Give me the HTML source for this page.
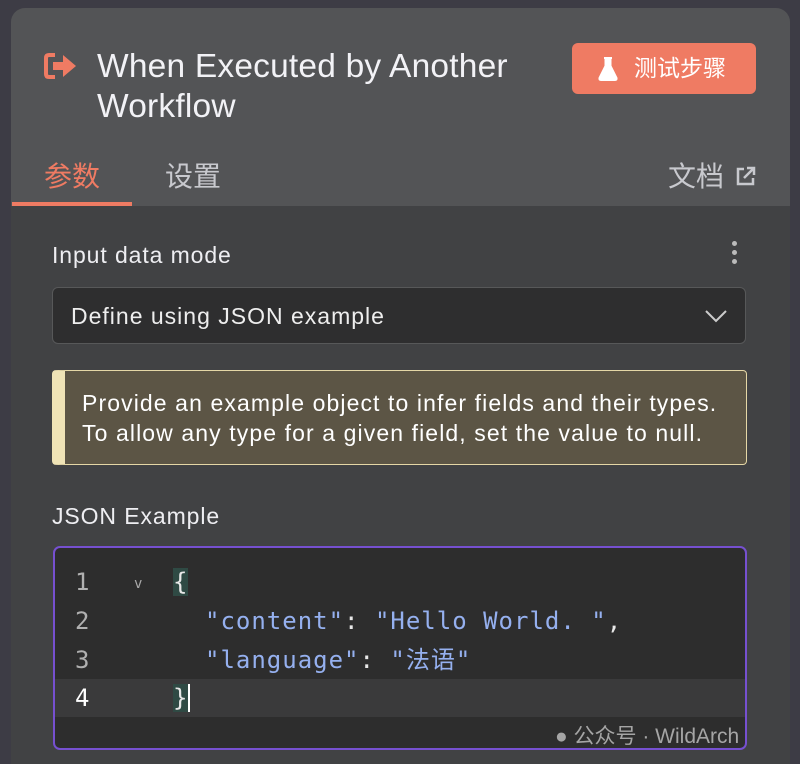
<!DOCTYPE html><html><head><meta charset="utf-8"><style>
html,body{margin:0;width:800px;height:764px;overflow:hidden}
body{background:#3d3c45;font-family:"Liberation Sans","Noto Sans CJK SC",sans-serif;position:relative}
.panel{position:absolute;left:11px;top:8px;width:779px;height:756px;background:#414244;border-radius:14px 14px 0 0;overflow:hidden}
.head{position:absolute;left:0;top:0;width:779px;height:198px;background:#535456}
.title{position:absolute;left:86px;top:39px;color:#f2f2f6;font-size:33.5px;line-height:40px;letter-spacing:.2px}
.btn{position:absolute;left:561px;top:35px;width:184px;height:51px;background:#ef7b63;border-radius:6px;color:#fff;font-size:23px;line-height:51px}
.tab{position:absolute;top:147px;font-size:28px;color:#c8c9ce}
.ul{position:absolute;left:1px;top:194px;width:120px;height:4px;background:#ef7b63}
.lbl{position:absolute;left:41px;color:#eeeef2;font-size:23px;letter-spacing:.9px}
.sel{position:absolute;left:41px;top:279px;width:694px;height:57px;background:#2e2e2f;border:1px solid #575859;border-radius:6px;color:#eee;font-size:23px;letter-spacing:1px;line-height:57px;box-sizing:border-box;padding-left:18px}
.note{position:absolute;left:41px;top:362px;width:695px;height:95px;background:#5c5545;border:1px solid #e5d7a6;border-left:13px solid #efe3b6;border-radius:4px;box-sizing:border-box;color:#fff;font-size:23px;letter-spacing:1.1px;line-height:30px;padding:17px 0 0 17px;white-space:nowrap}
.code{position:absolute;left:42px;top:538px;width:694px;height:204px;background:#2d2d2d;border:2px solid #7650d0;border-radius:7px;box-sizing:border-box;font-family:"DejaVu Sans Mono","Liberation Mono","Noto Sans CJK SC",monospace;font-size:24px;letter-spacing:1px;overflow:hidden}
.ln,.ct{position:absolute;height:38px;line-height:38px;white-space:nowrap}
.ln{left:20px;color:#b0b0b0}
.ct{left:118px;color:#e8e8e8}
.s{color:#95b0ef}
</style></head><body>
<div class="panel">
<div class="head"></div>
<svg style="position:absolute;left:32px;top:44px" width="36" height="28" viewBox="0 0 36 28"><path d="M12 3H6Q3 3 3 6V22Q3 25 6 25H12" fill="none" stroke="#ef7b63" stroke-width="4"/><path d="M10 10H20V3L33 14L20 25V18H10Z" fill="#ef7b63"/></svg>
<div class="title">When Executed by Another<br>Workflow</div>
<div class="btn"><svg style="position:absolute;left:26px;top:14px" width="20" height="24" viewBox="0 0 20 24"><path d="M6 1H14M7.5 1V9L1.5 21Q1 23 3 23H17Q19 23 18.5 21L12.5 9V1" fill="#fff" stroke="#fff" stroke-width="2"/></svg><span style="position:absolute;left:62px">测试步骤</span></div>
<div class="tab" style="left:33px;color:#ef7b63">参数</div>
<div class="tab" style="left:154px">设置</div>
<div class="tab" style="left:657px">文档</div>
<svg style="position:absolute;left:724px;top:157px" width="22" height="22" viewBox="0 0 22 22"><path d="M9 4H3V19H18V13M12 3H19V10M19 3L9 13" fill="none" stroke="#c8c9ce" stroke-width="2.5"/></svg>
<div class="ul"></div>
<div class="lbl" style="top:234px">Input data mode</div>
<div style="position:absolute;left:721px;top:233px;width:5px;height:5px;border-radius:3px;background:#bbb;box-shadow:0 9px 0 #bbb,0 18px 0 #bbb"></div>
<div class="sel">Define using JSON example<svg style="position:absolute;right:18px;top:22px" width="22" height="13" viewBox="0 0 22 13"><path d="M1 1L11 11L21 1" fill="none" stroke="#ccc" stroke-width="2"/></svg></div>
<div class="note">Provide an example object to infer fields and their types.<br>To allow any type for a given field, set the value to null.</div>
<div class="lbl" style="top:495px">JSON Example</div>
<div class="code">
<div style="position:absolute;left:0;top:131px;width:694px;height:38px;background:#3a3a3b"></div>
<div class="ln" style="top:15px">1</div><div class="ln" style="top:54px">2</div><div class="ln" style="top:93px">3</div><div class="ln" style="top:131px;color:#fff">4</div>
<div style="position:absolute;left:79px;top:28px;color:#aaa;font-size:14px">v</div>
<div class="ct" style="top:15px"><span style="background:#2f4a44">{</span></div>
<div class="ct" style="top:54px;left:150px"><span class="s">"content"</span>: <span class="s">"Hello World. "</span>,</div>
<div class="ct" style="top:93px;left:150px"><span class="s">"language"</span>: <span class="s">"法语"</span></div>
<div class="ct" style="top:131px"><span style="background:#2f4a44">}</span><span style="border-left:2px solid #fff"></span></div>
</div>
</div>
<div style="position:absolute;left:555px;top:720px;color:#bbb;font-size:21px;opacity:.85">● 公众号 · WildArch</div>
</body></html>
